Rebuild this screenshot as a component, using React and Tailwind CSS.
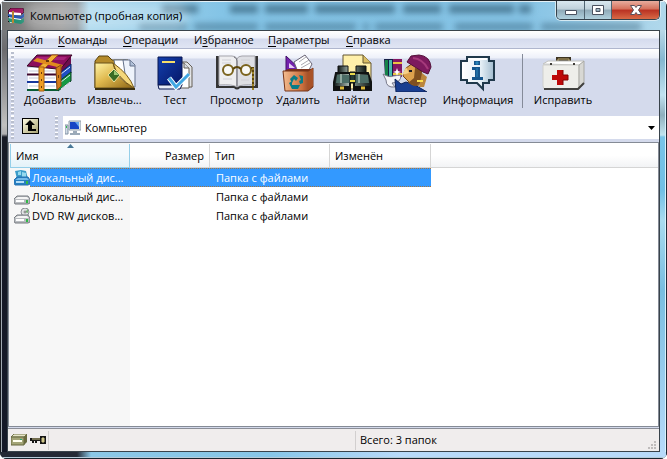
import React from 'react';

const BooksIcon = ({ className }) => (
  <svg className={className} viewBox="0 0 46 38" aria-hidden="true">
    <path d="m28 15 16-13v9L30 22z" fill="#6d0d4c" />
    <path d="m29 22 15-12v9L30 30z" fill="#1f4fc4" stroke="#0c2260" />
    <path d="m30 29 14-11v9L31 37z" fill="#159a44" stroke="#083c20" />
    <path d="m34 20 9-7m-9 15 9-7m-9 14 9-7" stroke="#e4ebf4" />
    <path d="M1 14h28v22H1z" fill="#fff" />
    <path d="M2 17h26M2 24h26M2 32h26" stroke="#c3c8d6" />
    <path d="M0 20.500h29" stroke="#40082c" strokeWidth="2" />
    <path d="M0 28h29" stroke="#17389c" strokeWidth="2" />
    <path d="M0 36h31" stroke="#0a5c34" strokeWidth="2" />
    <path d="M0 12 10 1h35l-9 11-6 3z" fill="#8c0d5c" stroke="#3a0826" />
    <path d="m10 3h30l-3 3H8z" fill="#a72379" />
    <path d="m12 13 13-12h6L18 14z" fill="#f3b139" stroke="#a45a12" />
    <path d="m10 4 26 7-2 3L6 7z" fill="#e08a1e" />
    <path d="M12 13h5v24h-5z" fill="#ee9f24" stroke="#a9600f" />
    <path d="m29 14 5-3v21l-4 4z" fill="#d27c1c" stroke="#8b4a10" />
    <path d="M14 18h1v2h-1zm0 7h1v2h-1zm0 7h1v2h-1zM19 6h3v2h-3zM31 21h1v3h-1z" fill="#6a380c" />
  </svg>
);

const FolderIcon = ({ className }) => (
  <svg className={className} viewBox="0 0 42 36" aria-hidden="true">
    <defs>
      <linearGradient id="folder" x2="1" y2="1">
        <stop stopColor="#fff4a8" />
        <stop offset=".45" stopColor="#dfb84d" />
        <stop offset="1" stopColor="#8b6515" />
      </linearGradient>
    </defs>
    <path d="M1 6 5 1h9l4 4h16v28H1z" fill="#b58b2b" stroke="#594410" />
    <path d="M20 5h12l5 5v19H24z" fill="#fff" stroke="#68758a" />
    <path d="M29 5h7l5 5v22h-8z" fill="#eef3fb" stroke="#64718a" />
    <path d="M36 5v6h5" fill="#aebfd8" stroke="#64718a" />
    <path d="M1 8h18q2 15 21 25H1z" fill="url(#folder)" stroke="#69511a" />
    <path d="M19 8q4 15 21 25-5-14-21-25z" fill="#f4d77a" stroke="#7a5a16" />
    <path d="m20 14 6 6-6 7-6-7z" fill="#386c25" stroke="#e9e2a0" />
    <path d="m20 15 5 5h-5z" fill="#99c875" />
    <path d="M1 34h40" stroke="#3c3010" strokeWidth="2" />
  </svg>
);

const TestIcon = ({ className }) => (
  <svg className={className} viewBox="0 0 36 36" aria-hidden="true">
    <defs>
      <linearGradient id="cover" x2="1" y2="1">
        <stop stopColor="#123fae" />
        <stop offset="1" stopColor="#061767" />
      </linearGradient>
    </defs>
    <path d="M23 7h7l5 5v20H23z" fill="#e0e2e5" stroke="#655e55" />
    <path d="M20 8h7l5 5v20H20z" fill="#fff" stroke="#655e55" />
    <path d="M27 8v5h5" fill="#d3d9e2" stroke="#655e55" />
    <path d="M1 2h24v28H1z" fill="url(#cover)" stroke="#081650" />
    <path d="M1 30h24l-2 4H2z" stroke="#081650" fill="#e9edf7" />
    <path d="M5 7h13" stroke="#f5dd69" strokeWidth="2" />
    <path d="m12 23 7 9 13-13" fill="none" stroke="#fff" strokeWidth="5" />
    <path d="m12 23 7 9 13-13" fill="none" stroke="#42a7e3" strokeWidth="3" />
  </svg>
);

const ViewIcon = ({ className }) => (
  <svg className={className} viewBox="0 0 44 38" aria-hidden="true">
    <path d="M1 2h3v30h36V2h3v32H25q-3 3-6 0H1z" fill="#343434" />
    <path d="M4 2h13q4 0 5 3v28q-4-3-18-2z" fill="#eeeef0" stroke="#a5a5ab" />
    <path d="M40 2H27q-4 0-5 3v28q4-3 18-2z" fill="#dedfe4" stroke="#a5a5ab" />
    <path d="M19 3q3 1 3 4v25" fill="none" stroke="#73737c" />
    <path d="M7 6h9M7 9h9M8 25h9M26 6h9M26 9h9M26 26h8" stroke="#d0d0d6" />
    <circle cx="13" cy="16" r="5" fill="#f9f9f6" stroke="#7b641e" strokeWidth="2" />
    <circle cx="31" cy="16" r="5" fill="#f9f9f6" stroke="#7b641e" strokeWidth="2" />
    <path d="M18 15q4-4 8 0M36 14h2v22" fill="none" stroke="#5d470d" strokeWidth="2" />
    <path d="M38 14v22" stroke="#dfc045" strokeDasharray="2 2" />
  </svg>
);

const DeleteIcon = ({ className }) => (
  <svg className={className} viewBox="0 0 32 38" aria-hidden="true">
    <defs>
      <linearGradient id="bin" x2="1">
        <stop stopColor="#f4bd91" />
        <stop offset=".65" stopColor="#c96e3c" />
        <stop offset="1" stopColor="#80391c" />
      </linearGradient>
    </defs>
    <path d="M4 2v15h16z" fill="#7421ad" stroke="#421068" />
    <path d="M7 9v5h6z" fill="#e7cef5" />
    <path d="m12 8 11-7 7 9-4 8H16z" fill="#fff" stroke="#696475" />
    <path d="m17 8 7-5m-5 8 8-5m-8 8 9-5" stroke="#abaab1" />
    <path d="m1 18 5-3h25l-5 3z" fill="#7c321b" />
    <path d="M1 17h26l4-3v19l-5 4H3z" fill="url(#bin)" stroke="#753519" />
    <path d="M26 18v18l5-4V14z" fill="#a95227" />
    <path d="m8 25 4-4 4 3-2 3-2-2-2 4zM17 21l4 1v7l-3 1-1-3 2-1zM7 29l3-2v4h8l-2 4H10z" fill="#087c88" />
  </svg>
);

const FindIcon = ({ className }) => (
  <svg className={className} viewBox="0 0 40 38" aria-hidden="true">
    <defs>
      <linearGradient id="barrel" x2="1">
        <stop stopColor="#101817" />
        <stop offset=".45" stopColor="#b7c8c0" />
        <stop offset=".6" stopColor="#65756e" />
        <stop offset="1" stopColor="#101817" />
      </linearGradient>
    </defs>
    <path d="M10 1h20l8 8v26H10z" fill="#fff0aa" stroke="#645733" />
    <path d="M30 1v8h8" fill="#d9bd64" stroke="#645733" />
    <path d="M5 12h10v8H5zm18 0h10v8H23z" fill="url(#barrel)" stroke="#111" />
    <path d="M3 19h14v17H1v-8zM21 19h14l3 9v8H21z" fill="url(#barrel)" stroke="#101313" strokeWidth="2" />
    <path d="M4 21h13v8H3zM22 21h13l1 8H22z" fill="#4c6d66" />
    <path d="M8 20v9m18-9v9" stroke="#91aaa0" strokeWidth="2" />
    <path d="M17 18h5v11h-5z" fill="#263b34" stroke="#111" />
    <path d="M17 20h5m-5 7h5" stroke="#e8d94c" strokeWidth="2" />
    <path d="M2 34h15m5 0h15" stroke="#111" strokeWidth="4" />
    <path d="M7 34h4m17 0h4" stroke="#dbb83b" strokeWidth="3" />
  </svg>
);

const WizardIcon = ({ className }) => (
  <svg className={className} viewBox="0 0 50 38" aria-hidden="true">
    <path d="M2 5h18v18H3z" fill="#151e45" />
    <path d="M3 6h3v17H3z" fill="#158349" />
    <path d="M7 6h3v17H7z" fill="#48b8ac" />
    <path d="M11 5h9v18h-9z" fill="#841764" />
    <path d="M11 9h9M11 20h9" stroke="#ebc442" strokeWidth="2" />
    <path d="M1 20q7 4 10 2l8-1q0 8-9 8l3 4q-9 1-9-7z" fill="#f4f4f8" stroke="#777889" />
    <path d="m13 25 6 5 5-2 9 3 12 7H14z" fill="#193e91" stroke="#0e2357" />
    <path d="m24 14 10-7 6 8-3 16q-7 2-11-4l-5-5z" fill="#dca14d" stroke="#754817" />
    <path d="m24 13-4 8 7-2z" fill="#f5d18a" />
    <path d="m33 14 6 1 2 11-7 6-8-3 6-5z" fill="#805020" />
    <path d="m29 2-4 6 16 10 5 2 3-7Q48 2 37 1z" fill="#7d1a5e" stroke="#531139" />
    <path d="M31 4q10 1 15 11" fill="none" stroke="#a53a7b" strokeWidth="2" />
    <path d="m40 19 5 4-3 10h-5z" fill="#bb863c" />
    <path d="M27 16h3v2h-3z" fill="#191923" />
    <path d="M35 27h6" stroke="#ffe04d" strokeWidth="2" />
    <path d="m15 14 1 3 3 1-3 1-1 3-1-3-3-1 3-1z" fill="#fff" />
  </svg>
);

const InfoIcon = ({ className }) => (
  <svg className={className} viewBox="0 0 36 36" aria-hidden="true">
    <defs>
      <linearGradient id="bubble" x2="1">
        <stop stopColor="#fff" />
        <stop offset=".6" stopColor="#e5eff6" />
        <stop offset="1" stopColor="#a2bccf" />
      </linearGradient>
    </defs>
    <path d="M7 2h22v4h5v19h-5v3h-6v6l-6-6H7v-3H1V6h6z" fill="url(#bubble)" stroke="#20394b" strokeWidth="2" />
    <path d="M9 4h18M3 9v13" stroke="#fff" strokeWidth="2" />
    <path d="M14 6h6v4h-6zM12 12h8v10h3v3H12v-3h3v-7h-3z" fill="#15558c" />
    <path d="M16 7h2v2h-2zm1 6v9" fill="#2b85b9" stroke="#2b85b9" />
  </svg>
);

const RepairIcon = ({ className }) => (
  <svg className={className} viewBox="0 0 44 36" aria-hidden="true">
    <path d="M17 8V4h11v5" fill="none" stroke="#3c3321" strokeWidth="4" />
    <path d="M17 8V4h11v4" fill="none" stroke="#bea96f" />
    <path d="m2 9 5-3h36l-4 4z" fill="#fff" stroke="#c2c2be" />
    <path d="M2 10h36v24H3l-1-3z" fill="#eeeeea" stroke="#d0d0cc" />
    <path d="m38 10 5-4v22l-5 6z" fill="#d8d8d4" stroke="#a8a8a3" />
    <path d="M3 34h34l6-6" fill="none" stroke="#41413f" strokeWidth="2" />
    <path d="M16 15h6v5h5v5h-5v5h-6v-5h-5v-5h5z" fill="#bd0909" />
    <path d="M22 15v5h5v5h-5v5" fill="none" stroke="#810303" />
    <path d="M9 8h2v2H9zm23 0h2v2h-2z" fill="#403d38" />
  </svg>
);

const AppIcon = ({ className }) => (
  <svg className={className} viewBox="0 0 16 16" aria-hidden="true">
    <path d="M0 3 3 0h12l1 4-2 2H1z" fill="#a01862" stroke="#42102c" />
    <path d="m1 4 12 1v2H1zm0 5 12 1v2H1zm1 4 12 1v1H2z" fill="#fff" />
    <path d="m0 6 13 2 3-3v4l-3 2-13-2z" fill="#2756b0" />
    <path d="m0 10 13 2 3-2v4l-3 2-12-2z" fill="#269176" />
    <path d="M4 3h2v12H4z" fill="#b98632" />
    <path d="M0 8v1m0 4v1" stroke="#111" strokeWidth="2" />
  </svg>
);

const ComputerIcon = () => (
  <svg className="h-4 w-4 shrink-0" viewBox="0 0 16 16" aria-hidden="true">
    <path d="M0 5h3v9H0z" fill="#d2dce7" stroke="#8192a3" />
    <path d="M1 6h1v2H1z" fill="#32b750" />
    <path d="M4 1h12v9H4z" fill="#d9e1e8" stroke="#8e9caa" />
    <path d="M5 2h9v7H5z" fill="#1745c5" />
    <path d="m10 2 4 0v5z" fill="#65a6ed" />
    <path d="M8 11h4v2h3v2H5v-2h3z" fill="#9baab8" />
  </svg>
);

const DriveIcon = ({ kind }) => (
  <svg className="h-4 w-4 shrink-0" viewBox="0 0 16 16" aria-hidden="true">
    {kind === 'system' && (
      <>
        <path d="m1 1 6-1 5 1 2 8H3z" fill="#3b9cc9" />
        <path d="m4 2 3-1v4H4zm4 0 4 1v4H8z" fill="#95d9ee" />
      </>
    )}
    {kind === 'disc' && (
      <>
        <circle cx="11" cy="4" r="4" fill="#e2e4e6" stroke="#8a8e94" />
        <path d="m11 4 3-3v4z" fill="#77b879" />
        <circle cx="11" cy="4" r="1" fill="#fff" stroke="#777" />
      </>
    )}
    <path d="m0 10 3-3h11l2 3v4l-2 1H1l-1-2z" fill={kind === 'system' ? '#277fc2' : '#b9bcc0'} stroke={kind === 'system' ? '#2672b0' : '#777b80'} />
    <path d="m1 10 3-2h9l2 2z" fill={kind === 'system' ? '#73bae9' : '#f4f4f4'} />
    <path d="M2 12h8" stroke={kind === 'system' ? '#b5def7' : '#fff'} strokeWidth="2" />
    <path d="M12 11h2v3h-2z" fill="#31b846" />
  </svg>
);

const menus = [
  ['', 'Ф', 'айл', 'w-[43px]'],
  ['', 'К', 'оманды', 'w-[65px]'],
  ['', 'О', 'перации', 'w-[71px]'],
  ['И', 'з', 'бранное', 'w-[74px]'],
  ['', 'П', 'араметры', 'w-[78px]'],
  ['', 'С', 'правка', 'w-[60px]'],
];

const tools = [
  ['Добавить', BooksIcon, 'w-16', 'w-[46px]'],
  ['Извлечь...', FolderIcon, 'w-[65px]', 'w-[42px]'],
  ['Тест', TestIcon, 'w-14', 'w-9'],
  ['Просмотр', ViewIcon, 'w-[67px]', 'w-11'],
  ['Удалить', DeleteIcon, 'w-14', 'w-8'],
  ['Найти', FindIcon, 'w-[54px]', 'w-10'],
  ['Мастер', WizardIcon, 'w-[54px]', 'w-[50px]'],
  ['Информация', InfoIcon, 'w-[88px]', 'w-9'],
];

const files = [
  { name: 'Локальный дис...', kind: 'system', selected: true },
  { name: 'Локальный дис...', kind: 'local' },
  { name: 'DVD RW дисков...', kind: 'disc' },
];

function Tool({ label, Icon, width, iconWidth }) {
  return (
    <button className={`flex shrink-0 flex-col items-center ${width}`}>
      <Icon className={`h-[38px] ${iconWidth}`} />
      <span className="leading-4 whitespace-nowrap">{label}</span>
    </button>
  );
}

const Grip = ({ className }) => (
  <span className={`w-[3px] shrink-0 bg-[repeating-linear-gradient(to_bottom,#fff_0_1px,#b9bfce_1px_3px,transparent_3px_4px)] ${className}`} />
);

function TitleBar() {
  return (
    <header className="relative flex h-[30px] shrink-0 justify-between overflow-hidden border-x border-t border-[#20252b] bg-[linear-gradient(to_right,#747474,#969696_60px,#8b9499_76px,#a9d7ed_88px,#84c4e6_220px,#85c3e5_520px,#b1d8eb)] pl-[7px] shadow-[inset_1px_1px_0_#e4f1f7]">
      <svg className="absolute inset-0 h-full w-full blur-[3px]" aria-hidden="true">
        <path d="M161 8h36M229 8h28M264 8h43M314 8h80M402 8h38M448 8h65M518 8h12" stroke="#274f66" strokeWidth="8" opacity=".6" />
        <path d="M138 26h48M193 26h64M264 26h91M362 26h6M374 26h68M454 26h78M540 26h100" stroke="#274f66" strokeWidth="7" opacity=".45" />
      </svg>
      <div className="relative flex items-center gap-[6px]">
        <AppIcon className="h-4 w-4" />
        <h1 className="rounded-full bg-white/25 whitespace-nowrap shadow-[0_0_8px_6px_rgba(255,255,255,0.25)]">Компьютер (пробная копия)</h1>
      </div>
      <div className="relative mr-[6px] flex h-[19px] overflow-hidden rounded-b-[5px] border border-t-0 border-[#34414b] shadow-[0_0_0_1px_#d5e9f2]">
        <button aria-label="Свернуть" className="flex w-7 items-center justify-center border-r border-[#506471] bg-[linear-gradient(#d9e8f0,#bfd0da_45%,#90aab8_50%,#b0d0dd)]">
          <svg className="h-4 w-4" viewBox="0 0 16 16"><path d="M2.5 8.5h11v4h-11z" fill="#fff" stroke="#4b5260" /></svg>
        </button>
        <button aria-label="Развернуть" className="flex w-[27px] items-center justify-center border-r border-[#506471] bg-[linear-gradient(#d9e8f0,#bfd0da_45%,#90aab8_50%,#b0d0dd)]">
          <svg className="h-4 w-4" viewBox="0 0 16 16"><path fillRule="evenodd" d="M2.5 3.5h11v9h-11zM6 6.5h4v3H6z" fill="#fff" stroke="#4b5260" /></svg>
        </button>
        <button aria-label="Закрыть" className="flex w-[47px] items-center justify-center bg-[linear-gradient(#e8ad9e,#d5705b_45%,#b93122_50%,#d86a46)]">
          <svg className="h-4 w-4" viewBox="0 0 16 16"><path d="M2.5 3.5h4L8 5.500l1.500-2h4L10.500 8l3 4.500h-4L8 10.500l-1.500 2h-4l3-4.500z" fill="#fff" stroke="#5a505a" /></svg>
        </button>
      </div>
    </header>
  );
}

function FileTable() {
  const head = 'h-6 border-r border-b border-[#d5d5d5] bg-[linear-gradient(#fff_50%,#f2f3f5)] px-[5px] font-normal';
  const picked =
    'bg-[#3399ff] bg-[image:repeating-linear-gradient(to_right,#a8743c_0_1px,#3399ff_1px_2px),repeating-linear-gradient(to_right,#a8743c_0_1px,#3399ff_1px_2px)] bg-[length:100%_1px] bg-[position:0_0,0_100%] bg-no-repeat text-white';
  return (
    <table className="w-full table-fixed border-separate border-spacing-0">
      <colgroup>
        <col className="w-[120px]" />
        <col className="w-20" />
        <col className="w-[120px]" />
        <col className="w-[101px]" />
        <col />
      </colgroup>
      <thead>
        <tr>
          <th className="relative h-6 border-x border-b border-[#95cfe9] bg-[linear-gradient(#f4fafd_45%,#e3f2f9)] px-[5px] text-left font-normal">
            <svg className="absolute top-0 left-14 h-1 w-[7px]" viewBox="0 0 7 4" aria-hidden="true"><path d="M3.500 0 7 4H0z" fill="#487897" /></svg>
            Имя
          </th>
          <th className={`${head} text-right`}>Размер</th>
          <th className={`${head} text-left`}>Тип</th>
          <th className={`${head} text-left`}>Изменён</th>
          <td className="border-b border-[#d5d5d5] bg-[linear-gradient(#fff_50%,#f2f3f5)]" />
        </tr>
      </thead>
      <tbody>
        {files.map((file, i) => {
          const cell = file.selected ? picked : '';
          return (
            <tr key={i} className="leading-[19px] whitespace-nowrap">
              <td className="p-0">
                <div className="flex items-center pl-1">
                  <DriveIcon kind={file.kind} />
                  <span className={`flex-1 pl-[2px] ${cell}`}>{file.name}</span>
                </div>
              </td>
              <td className={`p-0 ${cell}`} />
              <td className={`py-0 pl-[6px] ${cell}`}>Папка с файлами</td>
              <td className={`p-0 ${cell}`} />
              <td className="p-0" />
            </tr>
          );
        })}
      </tbody>
    </table>
  );
}

export default function App() {
  return (
    <div className="flex min-h-screen w-full flex-col overflow-hidden rounded-[7px] bg-[#171b22] font-['Open_Sans','Noto_Sans',sans-serif] text-[11px] leading-4 text-black">
      <TitleBar />
      <div className="flex flex-1">
        <div className="w-[7px] shrink-0 border-l border-[#16181c] bg-[linear-gradient(#77797d,#6b6b6e_20px,#c0c0c0_95px,#b0b0b2_104px,#171a26_107px,#141827)] shadow-[inset_1px_0_0_#a1a9b2]" />
        <main className="flex min-w-0 flex-1 flex-col border border-[#39434b] bg-[#d4daec]">
          <nav className="flex h-[18px] shrink-0 border-b border-[#afb6ce] bg-[linear-gradient(#fff,#f0f2fa_7px,#d5dbee_8px,#e0e5f3)]">
            {menus.map(([before, key, after, width]) => (
              <button key={key + after} className={`shrink-0 pl-[7px] text-left leading-[18px] ${width}`}>
                {before}<u className="underline-offset-2">{key}</u>{after}
              </button>
            ))}
          </nav>
          <section aria-label="Панель инструментов" className="flex h-[67px] shrink-0 bg-[linear-gradient(#fff,#edf0f9_9px,#d4daec_10px)] pl-[3px]">
            <Grip className="mt-[2px]" />
            <div className="flex pt-[5px] pl-1">
              {tools.map(([label, Icon, width, iconWidth]) => (
                <Tool key={label} label={label} Icon={Icon} width={width} iconWidth={iconWidth} />
              ))}
              <span className="mr-1 h-[54px] w-px bg-[#858b99]" />
              <Tool label="Исправить" Icon={RepairIcon} width="w-[72px]" iconWidth="w-11" />
            </div>
          </section>
          <div className="flex h-6 shrink-0 pl-[3px]">
            <Grip className="" />
            <button aria-label="Вверх" className="mt-[2px] ml-2 h-4 w-[17px] border border-black bg-[linear-gradient(135deg,#fffde3,#a6a171)]">
              <svg className="h-full w-full" viewBox="0 0 15 14" aria-hidden="true"><path d="M7 1 2 6h3v6h8v-2H9V6h3z" /></svg>
            </button>
            <Grip className="ml-4" />
            <label className="ml-[5px] flex h-[23px] min-w-0 flex-1 items-center gap-1 bg-white pr-1 pl-[2px]">
              <ComputerIcon />
              <select aria-label="Адрес" className="min-w-0 flex-1 appearance-none bg-transparent outline-none">
                <option>Компьютер</option>
              </select>
              <svg className="h-1 w-[7px]" viewBox="0 0 7 4" aria-hidden="true"><path d="M0 0h7L3.500 4z" /></svg>
            </label>
          </div>
          <section aria-label="Файлы" className="mt-[2px] flex-1 border border-[#858b96] bg-[linear-gradient(to_right,#f7f7f7_121px,#fff_121px)] pt-px pl-px">
            <FileTable />
          </section>
          <footer className="mt-px flex h-[23px] shrink-0 items-center border-t border-[#8c8f98] bg-[#f0eded]">
            <div className="flex h-[19px] w-[41px] items-center gap-[3px] border-r border-[#d2cfcf] pl-[3px]">
              <svg className="h-3 w-4" viewBox="0 0 16 12" aria-hidden="true">
                <path d="m0 3 3-3h13l-3 3z" fill="#e7e7c9" stroke="#74754d" />
                <path d="M0 3h13v8H0z" fill="#a3a477" stroke="#65663d" />
                <path d="m13 3 3-3v8l-3 3z" fill="#696a3f" />
                <path d="M2 7h9" stroke="#fffff0" strokeWidth="2" /><path d="M9 5h2v1H9z" fill="#28a878" />
              </svg>
              <svg className="h-3 w-[17px]" viewBox="0 0 17 12" aria-hidden="true">
                <path d="M0 4h10V2h6v8h-6V7H7v2H5V7H4v2H2V7H0z" fill="#161615" />
                <path d="M2 5h8m2-1h2v4h-2z" fill="#d0c78a" stroke="#d0c78a" />
              </svg>
            </div>
            <div className="h-[19px] flex-1 border-r border-[#d2cfcf]" />
            <div className="flex h-full w-[303px] items-center justify-between pl-1">
              <span>Всего: 3 папок</span>
              <svg className="mr-[2px] h-[11px] w-[11px] self-end" viewBox="0 0 11 11" aria-hidden="true"><path d="M8 1h2v2H8zM5 4h2v2H5zm3 0h2v2H8zM2 7h2v2H2zm3 0h2v2H5zm3 0h2v2H8z" fill="#bfbcbc" /></svg>
            </div>
          </footer>
        </main>
        <div className="w-[7px] shrink-0 border-r border-[#1e2b38] bg-[linear-gradient(#b9d9e8,#85b8d0_30px,#c0e2f0_65px,#8eafbd_85px,#c1e4ef_105px,#78c4e8_107px,#70bfe5_160px,#a9dbef_190px,#78bee0_260px,#b6dafa)] shadow-[inset_-1px_0_0_#d9f2fc]" />
      </div>
      <div className="h-[7px] shrink-0 border border-t-0 border-[#1a2530] bg-[linear-gradient(to_right,#242935_76px,#8bc8e7_90px,#87c6e8_270px,#b8dafa_400px)] shadow-[inset_0_-1px_0_#b5cbd9]" />
    </div>
  );
}
